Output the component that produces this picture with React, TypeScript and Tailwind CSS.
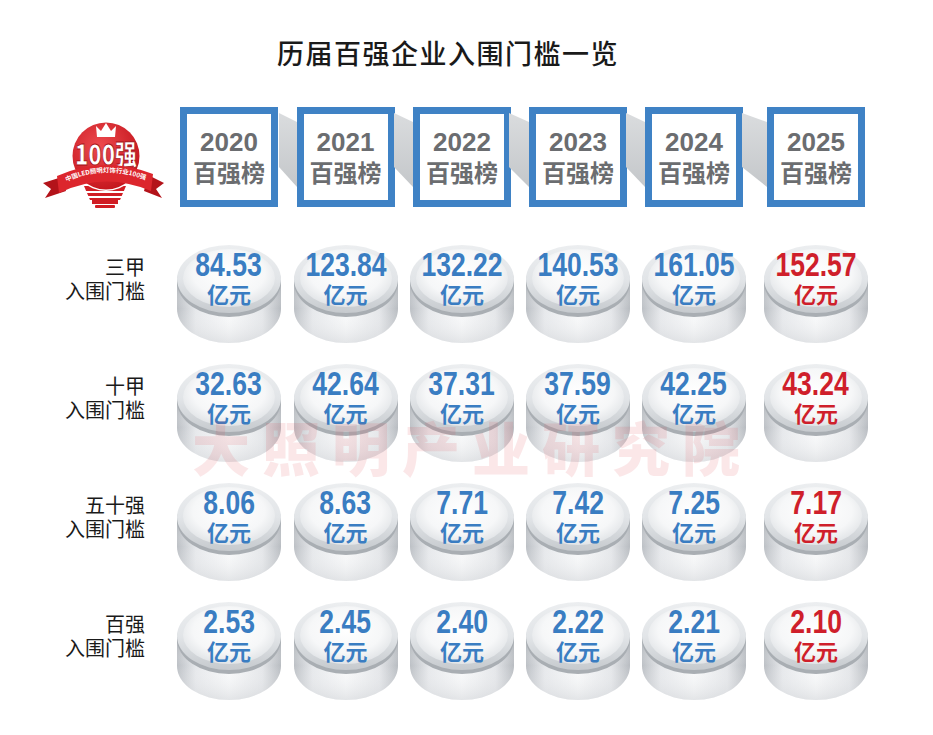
import React from "react";

const rows = [
  { label: ["三甲", "入围门槛"], vals: ["84.53", "123.84", "132.22", "140.53", "161.05", "152.57"] },
  { label: ["十甲", "入围门槛"], vals: ["32.63", "42.64", "37.31", "37.59", "42.25", "43.24"] },
  { label: ["五十强", "入围门槛"], vals: ["8.06", "8.63", "7.71", "7.42", "7.25", "7.17"] },
  { label: ["百强", "入围门槛"], vals: ["2.53", "2.45", "2.40", "2.22", "2.21", "2.10"] },
];

const years = ["2020", "2021", "2022", "2023", "2024", "2025"];
const connW = [0, 18, 19, 20, 19, 25];

function Disc({ value, red }: { value: string; red: boolean }) {
  const color = red ? "text-[#cf1f2b]" : "text-[#3a7dc2]";
  return (
    <div className="relative w-[108px] h-[102px]">
      <svg width="108" height="102" viewBox="0 0 108 102" className="block">
        <defs>
          <linearGradient id="dside" x1="0" y1="0" x2="1" y2="0">
            <stop offset="0" stopColor="#bcc0c5" />
            <stop offset="0.18" stopColor="#e6e8eb" />
            <stop offset="0.5" stopColor="#f8f9fa" />
            <stop offset="0.82" stopColor="#e4e6e9" />
            <stop offset="1" stopColor="#b8bcc1" />
          </linearGradient>
          <linearGradient id="dshade" x1="0" y1="0" x2="0" y2="1">
            <stop offset="0" stopColor="#8e949a" stopOpacity="0.5" />
            <stop offset="0.45" stopColor="#ffffff" stopOpacity="0" />
            <stop offset="1" stopColor="#c9ccd0" stopOpacity="0.45" />
          </linearGradient>
          <linearGradient id="drim" x1="0" y1="0" x2="0" y2="1">
            <stop offset="0" stopColor="#eceef0" />
            <stop offset="0.5" stopColor="#e2e5e8" />
            <stop offset="1" stopColor="#c6cace" />
          </linearGradient>
          <radialGradient id="dface" cx="0.5" cy="0.42" r="0.6">
            <stop offset="0" stopColor="#ffffff" />
            <stop offset="0.65" stopColor="#f6f7f8" />
            <stop offset="1" stopColor="#dfe2e5" />
          </radialGradient>
        </defs>
        <path d="M2 37 V66 A52 34 0 0 0 106 66 V37 Z" fill="url(#dside)" />
        <path d="M2 37 V66 A52 34 0 0 0 106 66 V37 Z" fill="url(#dshade)" />
        <ellipse cx="54" cy="39" rx="52" ry="35" fill="#a9aeb3" />
        <ellipse cx="54" cy="36" rx="52" ry="34" fill="url(#drim)" />
        <ellipse cx="54" cy="35" rx="46" ry="29" fill="url(#dface)" />
      </svg>
      <div className={`absolute inset-x-0 top-[6px] flex flex-col items-center ${color}`}>
        <span
          className="inline-block scale-x-[0.78] text-[34px] leading-[31px] font-bold"
          style={{ fontFamily: '"Liberation Sans", Arial, sans-serif' }}
        >
          {value}
        </span>
        <span
          className="text-[22px] leading-[26px] font-bold"
          style={{ fontFamily: '"Noto Sans CJK SC", sans-serif' }}
        >
          亿元
        </span>
      </div>
    </div>
  );
}

function Logo() {
  return (
    <svg width="125" height="102" viewBox="0 0 125 102" className="block">
      <defs>
        <radialGradient id="lg" cx="0.4" cy="0.35" r="0.7">
          <stop offset="0" stopColor="#ee4a4f" />
          <stop offset="1" stopColor="#c3141c" />
        </radialGradient>
        <path id="rp" d="M24 73 Q 64 53 108 71" />
      </defs>
      <path d="M44 76 L86 76 L80 90 L50 90 Z" fill="#d01d24" />
      <rect x="46" y="81" width="38" height="2" fill="#fff" />
      <rect x="48" y="86" width="34" height="2" fill="#fff" />
      <rect x="52" y="90" width="26" height="4" fill="#d01d24" />
      <rect x="55" y="95" width="20" height="3" rx="1" fill="#d01d24" />
      <circle cx="66" cy="46" r="35" fill="#fff" />
      <circle cx="66" cy="46" r="33.5" fill="url(#lg)" />
      <path d="M57 27 L56 16 L61 21 L66 13 L71 21 L76 16 L75 27 Z" fill="#fff" />
      <text
        x="66"
        y="55"
        textAnchor="middle"
        fontSize="28"
        fontWeight="900"
        fill="#fff"
        stroke="#a50f15"
        strokeWidth="0.8"
        textLength="62"
        lengthAdjust="spacingAndGlyphs"
        style={{ fontFamily: '"Noto Sans CJK SC", "Liberation Sans", sans-serif' }}
      >
        100强
      </text>
      <path d="M22 67 L3 73 L11 79 L5 88 L26 81 Z" fill="#b3131a" />
      <path d="M108 65 L124 73 L116 79 L122 88 L104 81 Z" fill="#b3131a" />
      <path d="M17 66 Q 64 45 113 64 L111 81 Q 64 61 19 83 Z" fill="#dc262d" />
      <text fontSize="6.4" fill="#fff" fontWeight="700" style={{ fontFamily: '"Noto Sans CJK SC", sans-serif' }}>
        <textPath href="#rp" startOffset="50%" textAnchor="middle">
          中国LED照明灯饰行业100强
        </textPath>
      </text>
    </svg>
  );
}

function YearBox({ year, cw }: { year: string; cw: number }) {
  return (
    <div className="relative w-[98px] h-[100px]">
      {cw > 0 && (
        <svg
          width={cw}
          height="100"
          viewBox={`0 0 ${cw} 100`}
          preserveAspectRatio="none"
          className="absolute right-full top-0"
        >
          <defs>
            <linearGradient id="cg" x1="0" y1="0" x2="0" y2="1">
              <stop offset="0" stopColor="#dadcde" />
              <stop offset="1" stopColor="#c4c7ca" />
            </linearGradient>
          </defs>
          <polygon points={`0,6 ${cw},15 ${cw},80 0,60`} fill="url(#cg)" />
        </svg>
      )}
      <div className="w-full h-full border-[7px] border-[#3f82c5] bg-white flex flex-col items-center justify-center text-[#6b6d70]">
        <div
          className="text-[26px] leading-[29px] font-bold"
          style={{ fontFamily: '"Liberation Sans", Arial, sans-serif' }}
        >
          {year}
        </div>
        <div
          className="text-[24px] leading-[29px] font-bold"
          style={{ fontFamily: '"Noto Sans CJK SC", sans-serif' }}
        >
          百强榜
        </div>
      </div>
    </div>
  );
}

export default function App() {
  const cjk = { fontFamily: '"Noto Sans CJK SC", sans-serif' };
  return (
    <div className="relative w-[933px] h-[735px] bg-white overflow-hidden">
      <div className="pt-[35px] pl-[277px]">
        <h1 className="text-[27px] leading-[36px] font-medium tracking-[1.5px] text-[#1a1a1a]" style={cjk}>
          历届百强企业入围门槛一览
        </h1>
      </div>
      <div className="mt-[36px] grid grid-cols-[171px_116px_117px_116px_116px_116px_128px]">
        <div className="pl-[40px] pt-[3px]">
          <Logo />
        </div>
        {years.map((y, i) => (
          <div key={y} className="flex justify-center">
            <YearBox year={y} cw={connW[i]} />
          </div>
        ))}
      </div>
      <div className="mt-[31px] flex flex-col">
        {rows.map((r, ri) => (
          <div key={ri} className="h-[119px] grid grid-cols-[171px_116px_117px_116px_116px_116px_128px]">
            <div
              className="pt-[12px] pr-[26px] text-right text-[20px] leading-[24px] text-[#1a1a1a]"
              style={cjk}
            >
              <div>{r.label[0]}</div>
              <div>{r.label[1]}</div>
            </div>
            {r.vals.map((v, ci) => (
              <div key={ci} className="flex justify-center">
                <Disc value={v} red={ci === 5} />
              </div>
            ))}
          </div>
        ))}
      </div>
      <div
        className="pointer-events-none absolute left-[192px] top-[414px] text-[58px] leading-[64px] font-black tracking-[12px] text-[#e0424c] opacity-[0.12] whitespace-nowrap"
        style={cjk}
      >
        大照明产业研究院
      </div>
    </div>
  );
}
